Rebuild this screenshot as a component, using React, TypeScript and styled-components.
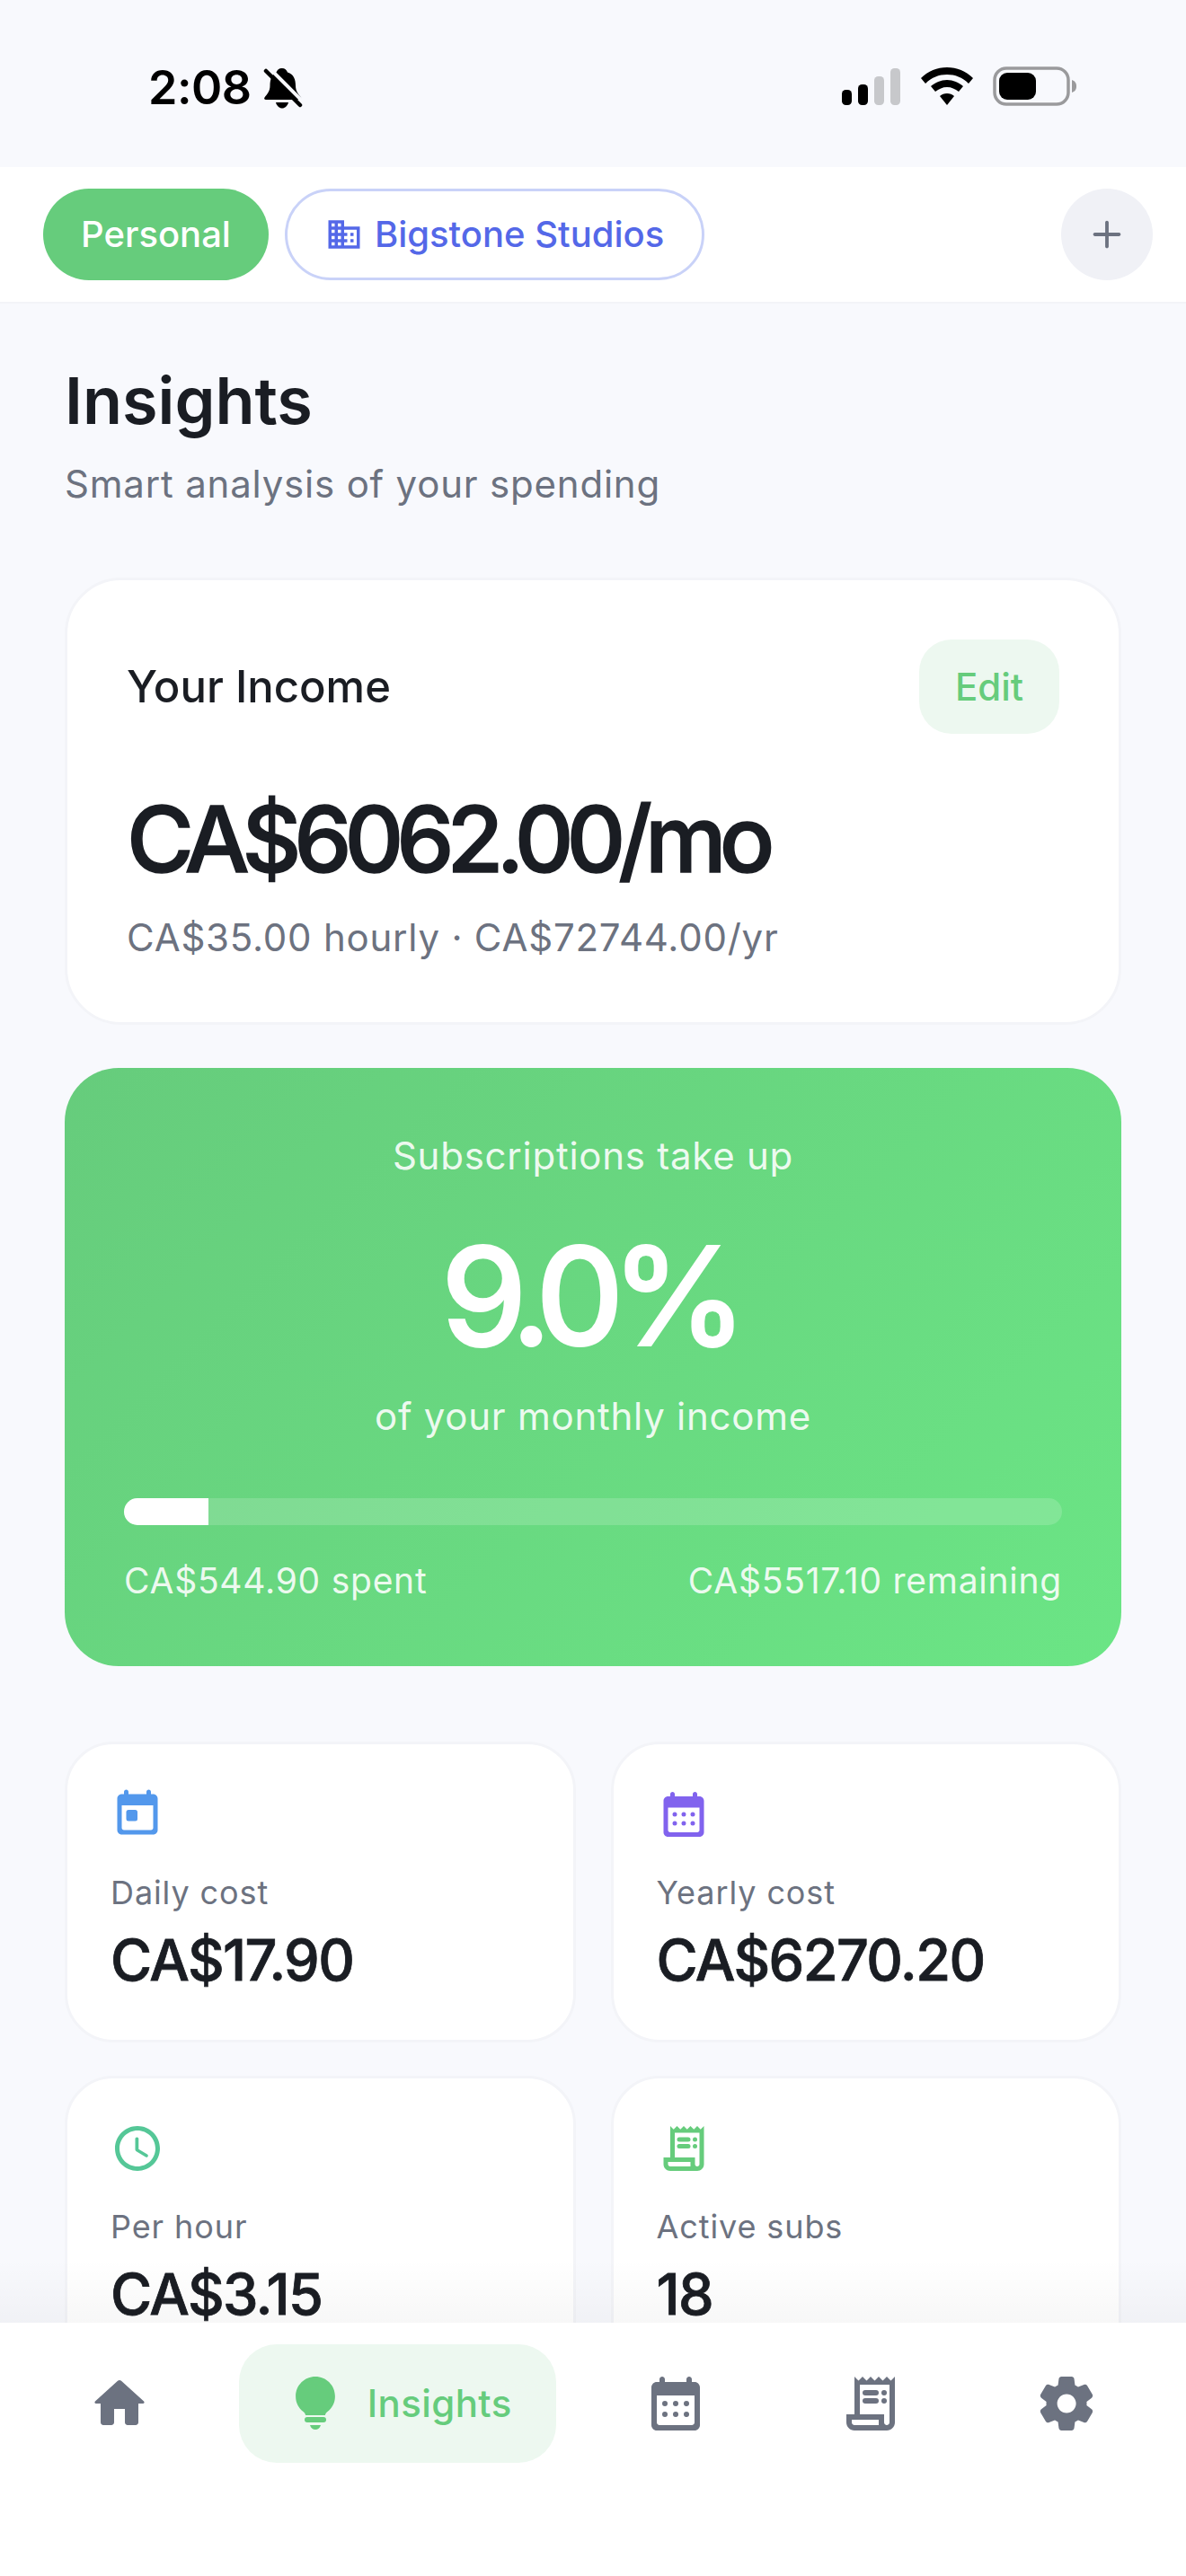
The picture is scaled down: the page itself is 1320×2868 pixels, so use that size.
import React from "react";
import styled, { createGlobalStyle } from "styled-components";
import { MdDomain } from "react-icons/md";

const GREEN = "#66cc7c";
const INK = "#1a1d23";
const MUTED = "#6c7280";
const FONT = `Inter, "Liberation Sans", sans-serif`;

const Global = createGlobalStyle`
  html, body { margin: 0; padding: 0; background: #f8f9fd; }
  * { box-sizing: border-box; }
  body { font-family: ${FONT}; -webkit-font-smoothing: antialiased; }
`;

const Page = styled.div`
  width: 1320px;
  height: 2868px;
  display: flex;
  flex-direction: column;
  background: #f8f9fd;
  overflow: hidden;
`;

const StatusBar = styled.div`
  height: 186px;
  flex: none;
  padding: 68px 121px 0 165px;
  display: flex;
  justify-content: space-between;
  align-items: flex-start;
`;

const StatusLeft = styled.div`
  display: flex;
  align-items: center;
  gap: 13px;
`;

const Clock = styled.span`
  font: 600 52px/60px ${FONT};
  color: #000;
  letter-spacing: -0.5px;
`;

const StatusRight = styled.div`
  display: flex;
  align-items: center;
  gap: 22px;
  height: 56px;
`;

const TopBar = styled.div`
  flex: none;
  height: 152px;
  background: #fff;
  border-bottom: 2px solid #f3f4f8;
  padding: 24px 37px 24px 48px;
  display: flex;
  align-items: flex-start;
  gap: 18px;
`;

const Pill = styled.div<{ $active?: boolean }>`
  height: 102px;
  border-radius: 51px;
  padding: 0 42px;
  display: flex;
  align-items: center;
  gap: 13px;
  font: 500 40px/1 ${FONT};
  color: ${(p) => (p.$active ? "#fff" : "#5468e8")};
  background: ${(p) => (p.$active ? GREEN : "#fff")};
  border: ${(p) => (p.$active ? "none" : "3px solid #c9d2f8")};
`;

const AddButton = styled.div`
  width: 102px;
  height: 102px;
  border-radius: 50%;
  margin-left: auto;
  background: #f0f1f6;
  color: ${MUTED};
  display: flex;
  align-items: center;
  justify-content: center;
`;

const Viewport = styled.div`
  flex: 1;
  min-height: 0;
  overflow: hidden;
  position: relative;
`;

const Content = styled.div`
  padding: 64px 72px 0;
`;

const Title = styled.h1`
  margin: 0;
  font: 600 72px/88px ${FONT};
  color: ${INK};
`;

const Subtitle = styled.p`
  margin: 23px 0 0;
  font: 400 42px/52px ${FONT};
  letter-spacing: 0.8px;
  color: ${MUTED};
`;

const IncomeCard = styled.section`
  margin-top: 78px;
  height: 498px;
  background: #fff;
  border: 3px solid #f3f4f8;
  border-radius: 63px;
  padding: 66px 66px 0;
`;

const IncomeHead = styled.div`
  display: flex;
  justify-content: space-between;
  align-items: center;
`;

const IncomeLabel = styled.div`
  font: 500 49px/60px ${FONT};
  color: ${INK};
`;

const EditButton = styled.div`
  width: 156px;
  height: 105px;
  border-radius: 36px;
  background: #edf8f0;
  color: ${GREEN};
  font: 500 42px/105px ${FONT};
  text-align: center;
`;

const IncomeValue = styled.div`
  margin-top: 59px;
  font: 500 102px/116px ${FONT};
  letter-spacing: -8px;
  -webkit-text-stroke: 1.5px ${INK};
  color: ${INK};
`;

const IncomeMeta = styled.div`
  margin-top: 26px;
  font: 400 42px/52px ${FONT};
  letter-spacing: 0.77px;
  color: ${MUTED};
`;

const HeroCard = styled.section`
  margin-top: 48px;
  height: 666px;
  border-radius: 60px;
  padding: 72px 66px 0;
  background: linear-gradient(135deg, #66cc7c, #6be585);
  color: #fff;
  text-align: center;
`;

const HeroLine = styled.div`
  font: 400 42px/52px ${FONT};
  letter-spacing: 0.75px;
  color: rgba(255, 255, 255, 0.9);
`;

const HeroValue = styled.div`
  margin: 50px 0 28px;
  padding-right: 12px;
  font: 500 152px/160px ${FONT};
  letter-spacing: -14px;
  -webkit-text-stroke: 2px #fff;
  color: #fff;
`;

const Track = styled.div`
  margin-top: 65px;
  height: 30px;
  border-radius: 15px;
  background: rgba(255, 255, 255, 0.16);
  overflow: hidden;
`;

const Fill = styled.div`
  height: 100%;
  background: #fff;
`;

const HeroFoot = styled.div`
  margin-top: 36px;
  display: flex;
  justify-content: space-between;
  font: 400 39px/52px ${FONT};
  letter-spacing: 0.75px;
  color: rgba(255, 255, 255, 0.9);
`;

const StatGrid = styled.div`
  margin-top: 84px;
  display: grid;
  grid-template-columns: 1fr 1fr;
  column-gap: 39px;
  row-gap: 37px;
`;

const StatCard = styled.div`
  height: 335px;
  background: #fff;
  border: 3px solid #f3f4f8;
  border-radius: 54px;
  padding: 45px 48px;
`;

const StatIcon = styled.div<{ $color: string }>`
  height: 66px;
  color: ${(p) => p.$color};
  display: flex;
  align-items: center;
`;

const StatLabel = styled.div`
  margin-top: 31px;
  font: 400 36px/46px ${FONT};
  letter-spacing: 0.9px;
  color: ${MUTED};
`;

const StatValue = styled.div`
  margin-top: 21px;
  font: 500 63px/62px ${FONT};
  letter-spacing: -1.6px;
  -webkit-text-stroke: 0.8px ${INK};
  color: ${INK};
`;

const Fade = styled.div`
  position: absolute;
  left: 0;
  right: 0;
  bottom: 0;
  height: 70px;
  background: linear-gradient(to bottom, rgba(0, 0, 0, 0), rgba(0, 0, 0, 0.03));
`;

const Nav = styled.nav`
  flex: none;
  height: 282px;
  background: #fff;
  padding: 24px 48px 0;
  display: flex;
  align-items: flex-start;
  gap: 48px;
`;

const NavItem = styled.div<{ $active?: boolean }>`
  flex: ${(p) => (p.$active ? "0 0 353px" : "1 1 0")};
  height: 132px;
  border-radius: 42px;
  display: flex;
  align-items: center;
  justify-content: center;
  gap: 22px;
  background: ${(p) => (p.$active ? "#edf8f0" : "transparent")};
  color: ${(p) => (p.$active ? GREEN : MUTED)};
`;

const NavLabel = styled.span`
  font: 500 42px/1 ${FONT};
  letter-spacing: 0.4px;
`;

const Glyph = ({ size, children }: { size: number; children: React.ReactNode }) => (
  <svg width={size} height={size} viewBox="0 0 24 24" fill="currentColor" aria-hidden style={{ flex: "none" }}>
    {children}
  </svg>
);

type IconProps = { size: number };

const PlusIcon = ({ size }: IconProps) => (
  <Glyph size={size}>
    <path d="M19 13h-6v6c0 .55-.45 1-1 1s-1-.45-1-1v-6H5c-.55 0-1-.45-1-1s.45-1 1-1h6V5c0-.55.45-1 1-1s1 .45 1 1v6h6c.55 0 1 .45 1 1s-.45 1-1 1z" />
  </Glyph>
);

const HomeIcon = ({ size }: IconProps) => (
  <Glyph size={size}>
    <path d="M10 19v-5h4v5c0 .55.45 1 1 1h3c.55 0 1-.45 1-1v-7h1.7c.46 0 .68-.57.33-.87L12.67 3.6c-.38-.34-.96-.34-1.34 0l-8.36 7.53c-.34.3-.13.87.33.87H5v7c0 .55.45 1 1 1h3c.55 0 1-.45 1-1z" />
  </Glyph>
);

const BulbIcon = ({ size }: IconProps) => (
  <Glyph size={size}>
    <path d="M12 2c4 0 7.3 3.2 7.3 7.3 0 2.4-1.1 4.4-2.8 5.7-.4.3-.7.7-.9 1.3H8.4c-.2-.6-.5-1-.9-1.3-1.7-1.3-2.8-3.3-2.8-5.7C4.7 5.2 8 2 12 2z" />
    <rect x="8" y="17" width="8" height="2" rx="1" />
    <path d="M10 20h4c-.3 1.1-1.1 1.7-2 1.7s-1.7-.6-2-1.7z" />
  </Glyph>
);

const TodayIcon = ({ size }: IconProps) => (
  <Glyph size={size}>
    <path d="M19 3h-1V2c0-.55-.45-1-1-1s-1 .45-1 1v1H8V2c0-.55-.45-1-1-1s-1 .45-1 1v1H5c-1.1 0-2 .9-2 2v14c0 1.1.9 2 2 2h14c1.1 0 2-.9 2-2V5c0-1.1-.9-2-2-2zm-1 16H6c-.55 0-1-.45-1-1V8h14v10c0 .55-.45 1-1 1z" />
    <rect x="7" y="10" width="5" height="5" rx="1" />
  </Glyph>
);

const CalendarIcon = ({ size }: IconProps) => (
  <Glyph size={size}>
    <path d="M19 4h-1V3c0-.55-.45-1-1-1s-1 .45-1 1v1H8V3c0-.55-.45-1-1-1s-1 .45-1 1v1H5c-1.1 0-2 .9-2 2v14c0 1.1.9 2 2 2h14c1.1 0 2-.9 2-2V6c0-1.1-.9-2-2-2zm0 15c0 .55-.45 1-1 1H6c-.55 0-1-.45-1-1V9h14v10z" />
    <circle cx="8" cy="12" r="1" />
    <circle cx="12" cy="12" r="1" />
    <circle cx="16" cy="12" r="1" />
    <circle cx="8" cy="16" r="1" />
    <circle cx="12" cy="16" r="1" />
    <circle cx="16" cy="16" r="1" />
  </Glyph>
);

const ClockIcon = ({ size }: IconProps) => (
  <Glyph size={size}>
    <path d="M11.99 2C6.47 2 2 6.48 2 12s4.47 10 9.99 10C17.52 22 22 17.52 22 12S17.52 2 11.99 2zM12 20c-4.42 0-8-3.58-8-8s3.58-8 8-8 8 3.58 8 8-3.58 8-8 8zm-.22-13h-.06c-.4 0-.72.32-.72.72v4.72c0 .35.18.68.49.86l4.15 2.49c.34.2.78.1.98-.24.21-.34.1-.79-.25-.99l-3.87-2.3V7.72c0-.4-.32-.72-.72-.72z" />
  </Glyph>
);

const ReceiptIcon = ({ size }: IconProps) => (
  <Glyph size={size}>
    <path d="M19.5 3.5 18 2l-1.5 1.5L15 2l-1.5 1.5L12 2l-1.5 1.5L9 2 7.5 3.5 6 2v14H3v3c0 1.66 1.34 3 3 3h12c1.66 0 3-1.34 3-3V2l-1.5 1.5zM15 20H6c-.55 0-1-.45-1-1v-1h10v2zm4-1c0 .55-.45 1-1 1s-1-.45-1-1v-3H8V5h11v14z" />
    <rect x="9" y="7" width="6" height="2" rx="1" />
    <circle cx="17" cy="8" r="1" />
    <rect x="9" y="10" width="6" height="2" rx="1" />
    <circle cx="17" cy="11" r="1" />
  </Glyph>
);

const GearIcon = ({ size }: IconProps) => (
  <Glyph size={size}>
    <path d="M19.5 12c0-.23-.01-.45-.03-.68l1.86-1.41c.4-.3.51-.86.26-1.3l-1.87-3.23c-.25-.44-.79-.62-1.25-.42l-2.15.91c-.37-.26-.76-.49-1.17-.68l-.29-2.31c-.06-.5-.49-.88-.99-.88h-3.73c-.51 0-.94.38-1 .88l-.29 2.31c-.41.19-.8.42-1.17.68l-2.15-.91c-.46-.2-1-.02-1.25.42L2.41 8.62c-.25.44-.14.99.26 1.3l1.86 1.41c-.02.22-.03.44-.03.67s.01.45.03.68l-1.86 1.41c-.4.3-.51.86-.26 1.3l1.87 3.23c.25.44.79.62 1.25.42l2.15-.91c.37.26.76.49 1.17.68l.29 2.31c.06.5.49.88.99.88h3.73c.5 0 .93-.38.99-.88l.29-2.31c.41-.19.8-.42 1.17-.68l2.15.91c.46.2 1 .02 1.25-.42l1.87-3.23c.25-.44.14-.99-.26-1.3l-1.86-1.41c.03-.23.04-.45.04-.68zm-7.46 3.5c-1.93 0-3.5-1.57-3.5-3.5s1.57-3.5 3.5-3.5 3.5 1.57 3.5 3.5-1.57 3.5-3.5 3.5z" />
  </Glyph>
);

const Bell = () => (
  <svg width="44" height="48" viewBox="0 0 44 48" aria-hidden style={{ marginTop: 2 }}>
    <path d="M21 1c3 0 5 2 6 4.500 7 2 9 8 9 15 0 6 3 9 6 13 1 1.500 0 2.500-1.500 2.500H3c-1.500 0-2.500-1-1.500-2.500 3-4 6-7 6-13 0-7 2-13 7-15 1-2.500 3-4.500 6-4.500Z" fill="#000" />
    <path d="M14 39h14c-1 4-4 6.500-7 6.500S15 43 14 39Z" fill="#000" />
    <path d="M7 1l40 40" stroke="#f8f9fd" strokeWidth="4" />
    <path d="M3 4l38 38" stroke="#000" strokeWidth="4.500" strokeLinecap="round" />
  </svg>
);

const Signal = () => (
  <svg width="66" height="42" viewBox="0 0 66 42" aria-hidden>
    <rect x="0" y="25" width="11" height="17" rx="4.500" fill="#000" />
    <rect x="18" y="19" width="11" height="23" rx="4.500" fill="#000" />
    <rect x="36" y="10" width="11" height="32" rx="4.500" fill="#c7c8cb" />
    <rect x="54" y="1" width="11" height="41" rx="4.500" fill="#c7c8cb" />
  </svg>
);

const Wifi = () => (
  <svg width="58" height="42" viewBox="0 0 58 42" aria-hidden>
    <path d="M29 0c11 0 21 4 29 12l-5 6C46 11 38 8 29 8S12 11 5 18l-5-6C8 4 18 0 29 0Z" fill="#000" />
    <path d="M29 14c7 0 13 3 18 7l-5 6c-4-3-8-5-13-5s-9 2-13 5l-5-6c5-4 11-7 18-7Z" fill="#000" />
    <path d="M29 29c3 0 6 1 8 3l-8 10-8-10c2-2 5-3 8-3Z" fill="#000" />
  </svg>
);

const Battery = () => (
  <svg width="94" height="44" viewBox="0 0 94 44" aria-hidden>
    <rect x="2" y="2" width="82" height="40" rx="13" fill="none" stroke="#9a9a9c" strokeWidth="3.500" />
    <rect x="7" y="7" width="41" height="30" rx="9" fill="#000" />
    <path d="M88 15c3 1 5 3 5 7s-2 6-5 7Z" fill="#9a9a9c" />
  </svg>
);

const stats = [
  { label: "Daily cost", value: "CA$17.90", color: "#5398ec", Icon: TodayIcon },
  { label: "Yearly cost", value: "CA$6270.20", color: "#8163ee", Icon: CalendarIcon },
  { label: "Per hour", value: "CA$3.15", color: "#55c797", Icon: ClockIcon },
  { label: "Active subs", value: "18", color: GREEN, Icon: ReceiptIcon },
];

export default function App() {
  const percent = 9;
  return (
    <Page>
      <Global />
      <StatusBar>
        <StatusLeft>
          <Clock>2:08</Clock>
          <Bell />
        </StatusLeft>
        <StatusRight>
          <Signal />
          <Wifi />
          <Battery />
        </StatusRight>
      </StatusBar>
      <TopBar>
        <Pill $active>Personal</Pill>
        <Pill>
          <MdDomain size={42} />
          Bigstone Studios
        </Pill>
        <AddButton>
          <PlusIcon size={46} />
        </AddButton>
      </TopBar>
      <Viewport>
        <Content>
          <Title>Insights</Title>
          <Subtitle>Smart analysis of your spending</Subtitle>
          <IncomeCard>
            <IncomeHead>
              <IncomeLabel>Your Income</IncomeLabel>
              <EditButton>Edit</EditButton>
            </IncomeHead>
            <IncomeValue>CA$6062.00/mo</IncomeValue>
            <IncomeMeta>CA$35.00 hourly · CA$72744.00/yr</IncomeMeta>
          </IncomeCard>
          <HeroCard>
            <HeroLine>Subscriptions take up</HeroLine>
            <HeroValue>9.0%</HeroValue>
            <HeroLine>of your monthly income</HeroLine>
            <Track>
              <Fill style={{ width: `${percent}%` }} />
            </Track>
            <HeroFoot>
              <span>CA$544.90 spent</span>
              <span>CA$5517.10 remaining</span>
            </HeroFoot>
          </HeroCard>
          <StatGrid>
            {stats.map(({ label, value, color, Icon }) => (
              <StatCard key={label}>
                <StatIcon $color={color}>
                  <Icon size={60} />
                </StatIcon>
                <StatLabel>{label}</StatLabel>
                <StatValue>{value}</StatValue>
              </StatCard>
            ))}
          </StatGrid>
        </Content>
        <Fade />
      </Viewport>
      <Nav>
        <NavItem>
          <HomeIcon size={72} />
        </NavItem>
        <NavItem $active>
          <BulbIcon size={72} />
          <NavLabel>Insights</NavLabel>
        </NavItem>
        <NavItem>
          <CalendarIcon size={72} />
        </NavItem>
        <NavItem>
          <ReceiptIcon size={72} />
        </NavItem>
        <NavItem>
          <GearIcon size={72} />
        </NavItem>
      </Nav>
    </Page>
  );
}
